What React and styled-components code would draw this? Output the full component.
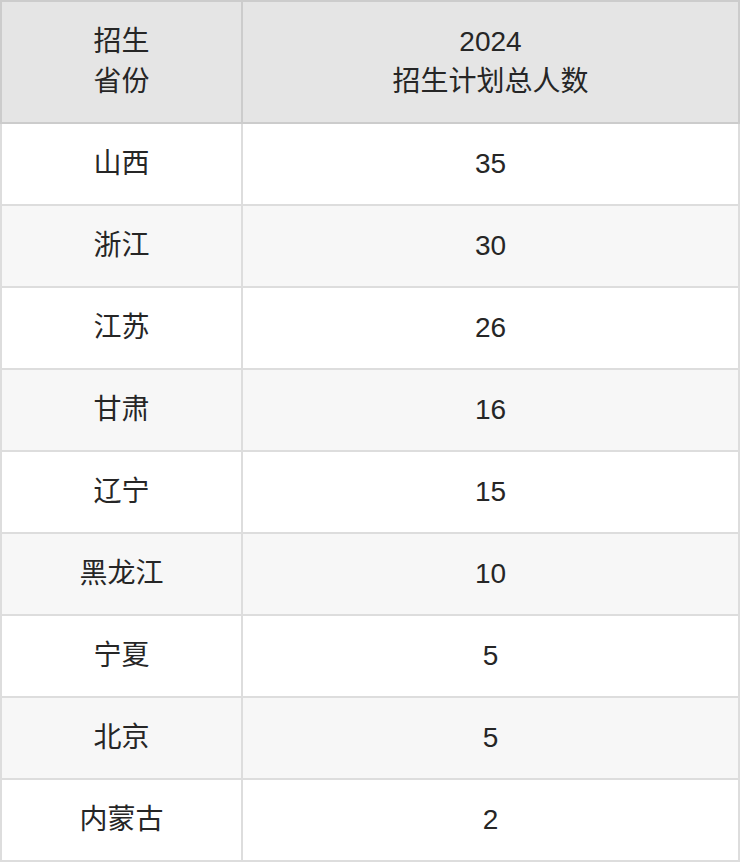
import React from "react";
import styled, { createGlobalStyle } from "styled-components";

const Global = createGlobalStyle`
  html, body { margin: 0; padding: 0; background: #fff; }
  body { font-family: "Liberation Sans", "Noto Sans CJK SC", sans-serif; }
`;

const Table = styled.table`
  width: 740px;
  border-collapse: separate;
  border-spacing: 0;
  table-layout: fixed;
  font-size: 28px;
  line-height: 40px;
  color: #262626;
`;

const HeadCell = styled.th`
  font-weight: normal;
  background: #e5e5e5;
  padding: 20px 0;
  text-align: center;
  border-top: 2px solid #ccc;
  border-right: 2px solid #ccc;
  border-bottom: 2px solid #ccc;
  border-left: ${(p) => (p.$first ? "2px solid #ccc" : "none")};
  ${(p) => (p.$w ? `width: ${p.$w}px;` : "")}
`;

const Row = styled.tr`
  background: ${(p) => (p.$alt ? "#f7f7f7" : "#fff")};
`;

const Cell = styled.td`
  padding: 20px 0;
  text-align: center;
  border-right: 2px solid #ddd;
  border-bottom: 2px solid #ddd;
  border-left: ${(p) => (p.$first ? "2px solid #ddd" : "none")};
`;

const data = [
  ["山西", 35],
  ["浙江", 30],
  ["江苏", 26],
  ["甘肃", 16],
  ["辽宁", 15],
  ["黑龙江", 10],
  ["宁夏", 5],
  ["北京", 5],
  ["内蒙古", 2],
];

export default function App() {
  return (
    <>
      <Global />
      <Table>
        <thead>
          <tr>
            <HeadCell $first $w={239}>
              招生
              <br />
              省份
            </HeadCell>
            <HeadCell>
              2024
              <br />
              招生计划总人数
            </HeadCell>
          </tr>
        </thead>
        <tbody>
          {data.map(([p, n], i) => (
            <Row key={p} $alt={i % 2 === 1}>
              <Cell $first>{p}</Cell>
              <Cell>{n}</Cell>
            </Row>
          ))}
        </tbody>
      </Table>
    </>
  );
}
